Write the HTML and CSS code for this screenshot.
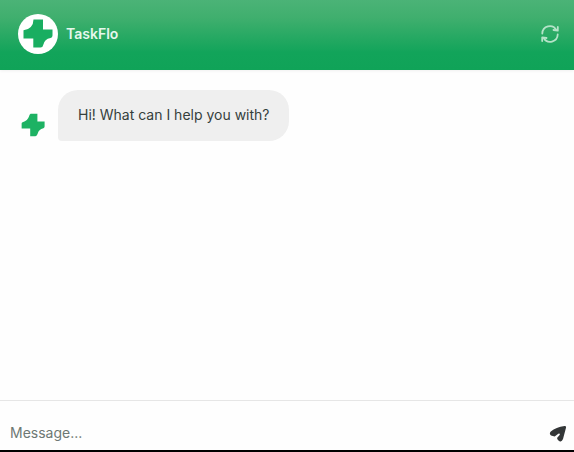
FILE: index.html
```html
<!DOCTYPE html>
<html lang="en">
<head>
<meta charset="utf-8">
<title>TaskFlo</title>
<link rel="stylesheet" href="styles.css">
</head>
<body>
<div class="chat">
  <header class="header">
    <div class="avatar">
      <svg class="logo" viewBox="0 0 30 30"><path d="M10.500 .5H20V10.500H29.500V16.500Q29.500 18.500 27.500 19Q21.500 20 20.200 26Q19.800 28.500 17.500 28.500H10.300V19.500H.5V11.200Q5 11 7.800 8Q10.500 5 10.500 .5Z"/></svg>
    </div>
    <h1 class="title">TaskFlo</h1>
    <button class="refresh" aria-label="Restart">
      <svg viewBox="0 0 18 18"><path d="M1.300 8.500A7.500 7.500 0 0 1 15.300 5M16.700 9.500A7.500 7.500 0 0 1 2.700 13"/><path d="M16.800 2V5.700L12.500 5M1.200 16V12.300L5.500 13"/></svg>
    </button>
  </header>
  <main class="messages">
    <div class="row">
      <svg class="bot" viewBox="0 0 30 30"><path d="M12 .8H20.500V10.500H29.500V17Q29.500 18.500 28 19Q22 20.500 20.800 26Q20 29 18 29H11.500V19.500H.8V13Q.8 11.800 2 11.500Q8.500 9.500 10 4.500Q10.500 1.500 12 .8Z"/></svg>
      <div class="bubble">Hi! What can I help you with?</div>
    </div>
  </main>
  <footer class="composer">
    <span class="placeholder">Message...</span>
    <svg class="send" viewBox="0 0 18 18"><path d="M15.500 1Q17.400 .8 17 2.700L14 14Q12.800 17.300 10.500 16.200Q8.500 15.500 8 13L10.800 9.700Q11 8 9.300 8.700L5.700 11.500L2 10.500Q-.2 8.700 1.800 6.500Q7 2 15.500 1Z"/></svg>
  </footer>
</div>
</body>
</html>
```

FILE: styles.css
```css
* { box-sizing: border-box; }
body {
  margin: 0;
  background: #fefefe;
  font-family: Inter, "Liberation Sans", sans-serif;
}
.chat {
  height: 452px;
  display: flex;
  flex-direction: column;
  border-bottom: 2px solid #000;
}
.header {
  height: 70px;
  flex: none;
  display: flex;
  align-items: center;
  padding: 0 15px 2px 18px;
  background: linear-gradient(#4bb377 0%, #40af6e 25%, #12a45a 75%, #10a358 100%);
  box-shadow: 0 1px 3px rgba(0, 0, 0, .06);
}
.avatar {
  width: 40px;
  height: 40px;
  border-radius: 50%;
  background: #fff;
  display: flex;
  align-items: center;
  justify-content: center;
}
.logo {
  width: 30px;
  height: 30px;
  fill: #19ae61;
}
.title {
  margin: 0 auto 0 8px;
  color: #e6f7ed;
  font-size: 14px;
  line-height: 20px;
  font-weight: 600;
}
.refresh {
  width: 18px;
  height: 18px;
  padding: 0;
  border: 0;
  background: none;
}
.refresh svg {
  display: block;
  fill: none;
  stroke: #b5e3c8;
  stroke-width: 1.8;
  stroke-linecap: round;
  stroke-linejoin: round;
}
.messages {
  flex: 1;
  padding: 20px 21px;
}
.row {
  display: flex;
  align-items: flex-end;
}
.bot {
  width: 24px;
  height: 24px;
  margin: 0 13px 4px 0;
  fill: #1db263;
}
.bubble {
  width: 231px;
  height: 51px;
  padding: 14px 20px;
  border-radius: 20px 20px 20px 4px;
  background: #efefef;
  color: #35403c;
  font-size: 14px;
  line-height: 21px;
  white-space: nowrap;
}
.composer {
  height: 50px;
  flex: none;
  display: flex;
  justify-content: space-between;
  align-items: center;
  padding: 14px 7px 0 10px;
  border-top: 1px solid #e6e6e6;
}
.placeholder {
  color: #6d7874;
  font-size: 14px;
  line-height: 20px;
}
.send {
  width: 18px;
  height: 18px;
  margin-top: 2px;
  fill: #333637;
}
```
